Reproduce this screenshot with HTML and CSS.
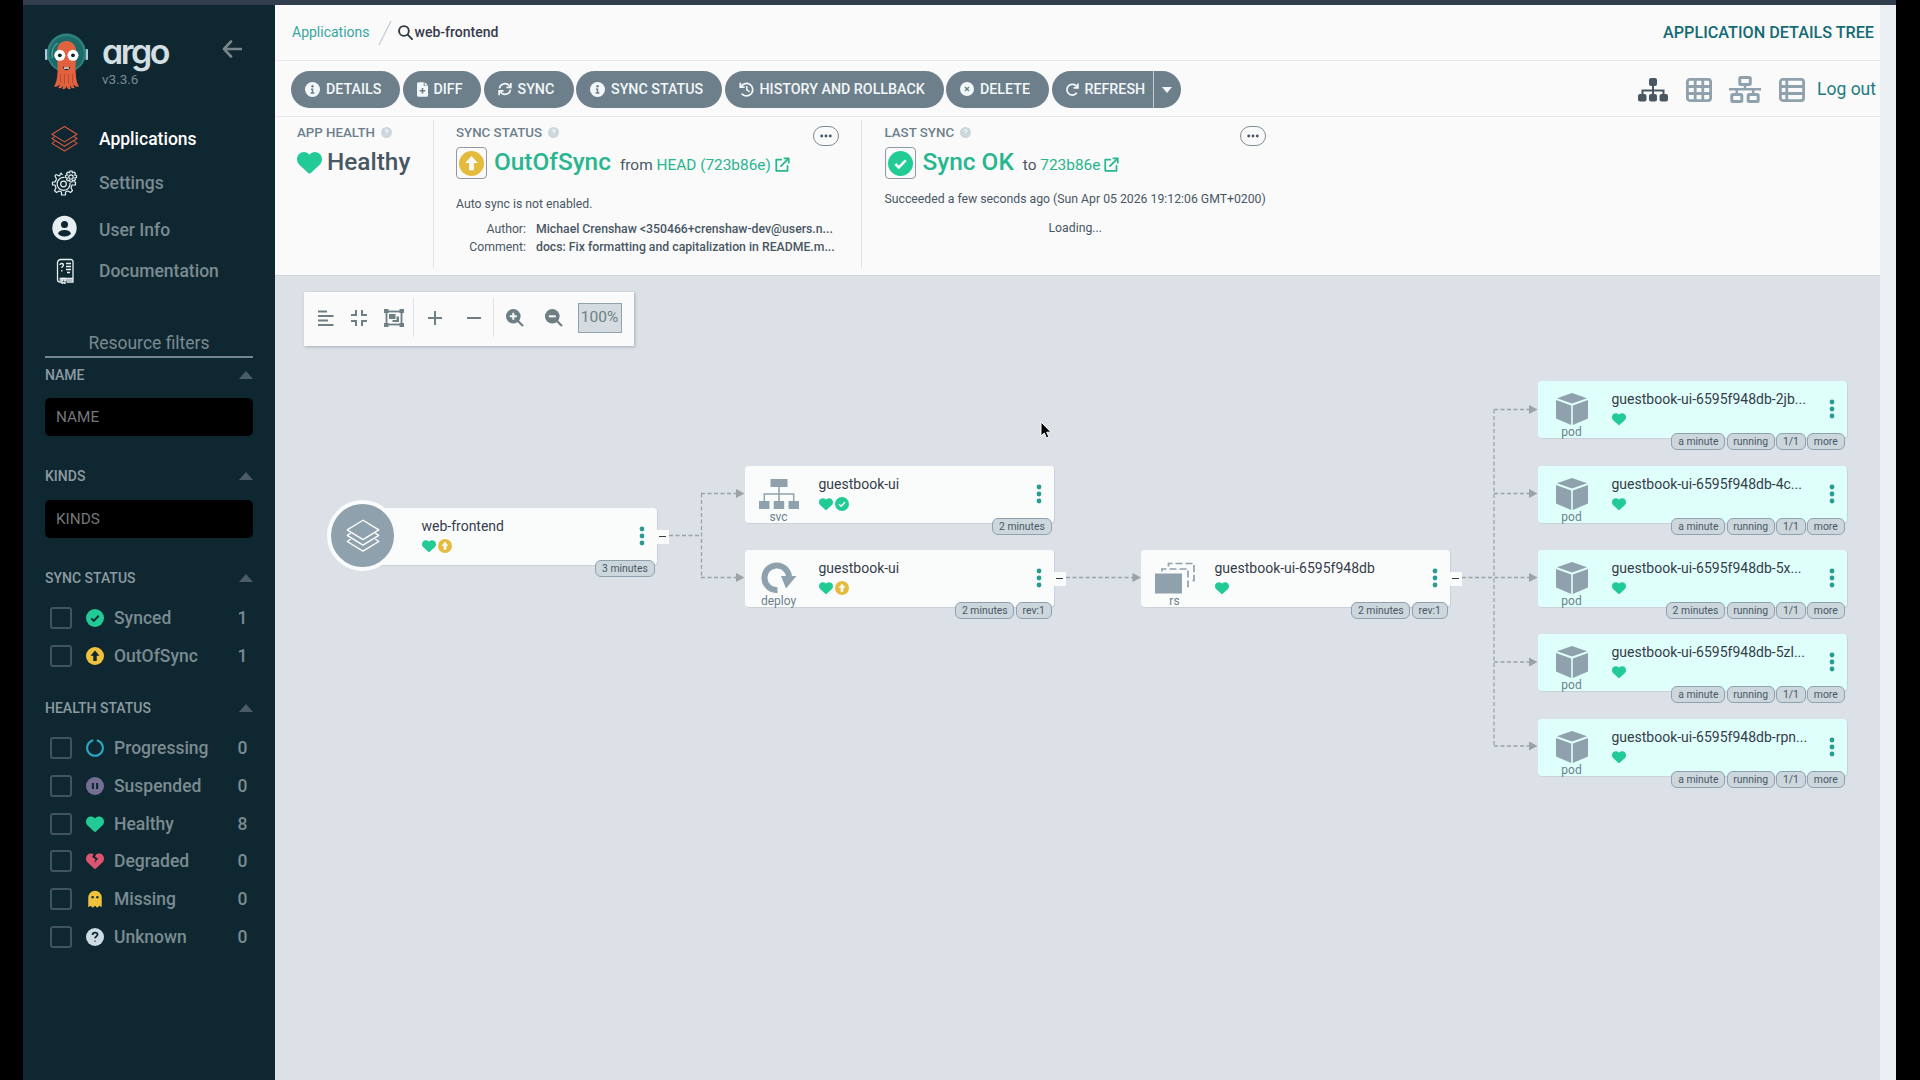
FILE: index.html
```html
<!DOCTYPE html>
<html lang="en">
<head>
    <meta charset="UTF-8">
    <meta name="viewport" content="width=device-width, initial-scale=1.0">
    <title>web-frontend - Application Details Tree - Argo CD</title>
    <link rel="stylesheet" href="styles.css">
</head>
<body>

<svg class="defs" width="0" height="0">
    <symbol id="i-heart" viewBox="0 0 512 512"><path fill="currentColor" d="M47.6 300.4L228.3 469.1c7.5 7 17.4 10.9 27.7 10.9s20.2-3.9 27.7-10.9L464.4 300.4c30.4-28.3 47.6-68 47.6-109.5v-5.8c0-69.9-50.5-129.5-119.4-141C347 36.5 300.6 51.4 268 84L256 96 244 84c-32.6-32.6-79-47.5-124.6-39.9C50.5 55.6 0 115.2 0 185.1v5.8c0 41.5 17.2 81.2 47.6 109.5z"/></symbol>
    <symbol id="i-broken" viewBox="0 0 512 512"><path fill="currentColor" d="M47.6 300.4L228.3 469.1c7.5 7 17.4 10.9 27.7 10.9s20.2-3.9 27.7-10.9L464.4 300.4c30.4-28.3 47.6-68 47.6-109.5v-5.8c0-69.9-50.5-129.5-119.4-141C347 36.5 320 45 300 60L256 130l84 62-100 124 30-112-94-62 40-82c-30-18-62-24-96.600-16.900C50.500 55.600 0 115.200 0 185.100v5.800c0 41.500 17.200 81.200 47.600 109.500z"/></symbol>
    <symbol id="i-check" viewBox="0 0 24 24"><circle cx="12" cy="12" r="12" fill="currentColor"/><path class="cut" d="M7 12.500l3.400 3.300L17 9" stroke-width="2.600"/></symbol>
    <symbol id="i-up" viewBox="0 0 24 24"><circle cx="12" cy="12" r="12" fill="currentColor"/><path class="cut-fill" d="M12 4.800l6 6.700h-3.700V18.500H9.700V11.500H6z"/></symbol>
    <symbol id="i-pause" viewBox="0 0 24 24"><circle cx="12" cy="12" r="12" fill="currentColor"/><path class="cut" d="M9.200 8v8M14.800 8v8" stroke-width="2.800"/></symbol>
    <symbol id="i-notch" viewBox="0 0 24 24"><path fill="none" stroke="currentColor" stroke-width="2.800" stroke-linecap="round" d="M8.500 2A10.500 10.500 0 1 0 15.500 2"/></symbol>
    <symbol id="i-ghost" viewBox="0 0 24 24"><path fill="currentColor" d="M3 10a9 9 0 0 1 18 0v13l-3-2-3 2.500-3-2.500-3 2.500-3-2.500-3 2z"/><circle class="cut-fill" cx="8.800" cy="9.500" r="1.600"/><circle class="cut-fill" cx="15.200" cy="9.500" r="1.600"/></symbol>
    <symbol id="i-question" viewBox="0 0 24 24"><circle cx="12" cy="12" r="12" fill="currentColor"/><path class="cut" d="M8.800 9.200c0-4.300 6.600-4 6.600-.400 0 2.500-3.400 2.300-3.400 4.900M12 17v1" stroke-width="2.400"/></symbol>
    <symbol id="i-info" viewBox="0 0 24 24"><circle cx="12" cy="12" r="12" fill="currentColor"/><circle class="cut-fill" cx="12" cy="6.700" r="1.900"/><path class="cut" d="M9.500 11.500H12V17M9 17.500h6" stroke-width="2.400"/></symbol>
    <symbol id="i-times" viewBox="0 0 24 24"><circle cx="12" cy="12" r="12" fill="currentColor"/><path class="cut" d="M8.500 8.500l7 7M15.500 8.500l-7 7" stroke-width="2.400"/></symbol>
    <symbol id="i-file" viewBox="0 0 18 24"><path fill="currentColor" d="M2.500 0H11v6h7v15.500a2.500 2.500 0 0 1-2.500 2.500h-13A2.500 2.500 0 0 1 0 21.500v-19A2.500 2.500 0 0 1 2.500 0zM12.500 0L18 5h-5.500z"/><path class="cut" d="M9 9.500v9M4.500 14h9" stroke-width="2.600"/></symbol>
    <symbol id="i-sync" viewBox="0 0 24 24"><g fill="none" stroke="currentColor" stroke-width="3"><path d="M2.500 11A9.500 9.500 0 0 1 20 7.500M21.500 13A9.500 9.500 0 0 1 4 16.500"/><path d="M22 1.500v7.500h-7.500M2 22.500V15h7.500"/></g></symbol>
    <symbol id="i-history" viewBox="0 0 24 24"><g fill="none" stroke="currentColor" stroke-width="2.800" stroke-linecap="round"><path d="M3.500 7A10 10 0 1 1 5 19.500M2 2v6h6"/><path d="M12.500 7v5.500l3.500 2.500" stroke-width="2.400"/></g></symbol>
    <symbol id="i-redo" viewBox="0 0 24 24"><g fill="none" stroke="currentColor" stroke-width="3.200"><path d="M20.500 7.500A10 10 0 1 0 20 18"/><path d="M22 1v8h-8"/></g></symbol>
    <symbol id="i-search" viewBox="0 0 24 24"><g fill="none" stroke="currentColor" stroke-width="3" stroke-linecap="round"><circle cx="9.500" cy="9.500" r="7.800"/><path d="M15.500 15.500l7 7"/></g></symbol>
    <symbol id="i-ext" viewBox="0 0 24 24"><g fill="none" stroke="currentColor" stroke-width="2.800" stroke-linecap="round" stroke-linejoin="round"><path d="M10 4H2v18h18v-8M9.500 14.500L21 3"/><path d="M15 2h7v7"/></g></symbol>
    <symbol id="i-stack" viewBox="0 0 28 28"><g fill="none" stroke="currentColor" stroke-width="1.100" stroke-linejoin="round"><path d="M14 1l13 8-13 8L1 9z"/><path d="M4 11.500L1 13.500l13 8 13-8-3-2"/><path d="M4 16.500L1 18.500l13 8 13-8-3-2"/></g></symbol>
    <symbol id="i-pod" viewBox="0 0 32 32"><path fill="currentColor" d="M16 0l15 5.200L16 10.600 1 5.200zM0 7l15.200 5.600V32L0 25.600zM32 7l-15.200 5.600V32L32 25.600z"/></symbol>
    <symbol id="i-svc" viewBox="0 0 40 30"><path fill="currentColor" d="M11.500 0h17v8h-17zM0 22h10.500v8H0zM14.700 22h10.500v8H14.700zM29.500 22H40v8H29.500z"/><path fill="none" stroke="currentColor" stroke-width="1.500" d="M20 8v14M5.300 22v-7h29.400v7"/></symbol>
    <symbol id="i-deploy" viewBox="0 0 36 32"><path fill="none" stroke="currentColor" stroke-width="6" d="M16.500 28A12.300 12.300 0 1 1 28 15"/><path fill="currentColor" d="M20 14h15.500L25 26.500z"/></symbol>
    <symbol id="i-rs" viewBox="0 0 40 31"><path fill="currentColor" d="M0 11h27v20H0z"/><g fill="none" stroke="currentColor" stroke-width="1.700" stroke-dasharray="7 3"><path d="M7 9V6.500h26V24h-4"/><path d="M13.500 4V1H39v17h-4"/></g></symbol>
    <symbol id="i-zoomin" viewBox="0 0 18 18"><circle cx="7.300" cy="7.300" r="7.300" fill="currentColor"/><path d="M11 11l6 6" stroke="currentColor" stroke-width="2.200"/><path class="cut" d="M7.300 3.800v7M3.800 7.300h7" stroke-width="2"/></symbol>
    <symbol id="i-zoomout" viewBox="0 0 18 18"><circle cx="7.300" cy="7.300" r="7.300" fill="currentColor"/><path d="M11 11l6 6" stroke="currentColor" stroke-width="2.200"/><path class="cut" d="M3.800 7.300h7" stroke-width="2"/></symbol>
    <symbol id="i-dots" viewBox="0 0 6 20"><g fill="currentColor"><circle cx="3" cy="3" r="2.400"/><circle cx="3" cy="10" r="2.400"/><circle cx="3" cy="17" r="2.400"/></g></symbol>
    <symbol id="i-ellipsis" viewBox="0 0 14 4"><g fill="currentColor"><circle cx="2" cy="2" r="1.700"/><circle cx="7" cy="2" r="1.700"/><circle cx="12" cy="2" r="1.700"/></g></symbol>
</svg>

<div class="window">
    <nav class="sidebar">
        <div class="brand">
            <svg class="mascot" width="44" height="58" viewBox="0 0 44 58">
                <rect x="0" y="17" width="2.500" height="11" rx="1" fill="#a9cbe2"/>
                <rect x="40.500" y="17" width="2.500" height="11" rx="1" fill="#a9cbe2"/>
                <circle cx="21.500" cy="21" r="19.500" fill="#2f7f7c"/>
                <circle cx="21.500" cy="21.500" r="17.300" fill="#1c6a69"/>
                <path d="M7.500 26a15 15 0 0 1 5-15" fill="none" stroke="#4c9a96" stroke-width="1.500"/>
                <path fill="#e2623f" d="M21.500 9c-6.500 0-9.500 5-9.500 11 0 8 1 12 .5 20-.3 6-1 11-3.500 14.500 3 .8 4.500-.5 5.500-2.500 0 2-.3 3-1.500 4 3 1 4.500-.5 5-3 0 2 0 3-1 4 3 .5 4-.5 4.500-3 .5 2.500 1.500 3.500 4.500 3-1-1-1-2-1-4 .5 2.500 2 4 5 3-1.200-1-1.500-2-1.500-4 1 2 2.500 3.300 5.500 2.500C31.500 51 31 46 30.700 40c-.5-8 .5-12 .5-20 0-6-3.200-11-9.700-11z"/>
                <path d="M15.500 42v9M19.500 42v10M23.500 42v10M27.500 42v9" stroke="#bb4a31" stroke-width="1"/>
                <circle cx="14.800" cy="23.300" r="5.500" fill="#fff"/>
                <circle cx="28" cy="23.300" r="5.500" fill="#fff"/>
                <circle cx="14.800" cy="23.300" r="1.900" fill="#0f2733"/>
                <circle cx="28" cy="23.300" r="1.900" fill="#0f2733"/>
                <path d="M17.800 34.500c2.500 1.500 5 1.500 7.500 0-1 5-6.500 5-7.500 0z" fill="#0f2733"/>
                <path d="M19 35.400h5v1.300h-5z" fill="#fff"/>
            </svg>
            <div class="brand-text">
                <div class="brand-name">argo</div>
                <div class="brand-version">v3.3.6</div>
            </div>
            <svg class="collapse" width="20" height="18" viewBox="0 0 20 18"><path d="M9 1.500L2 9l7 7.500M2 9h17" fill="none" stroke="currentColor" stroke-width="2.600" stroke-linecap="round" stroke-linejoin="round"/></svg>
        </div>

        <ul class="menu">
            <li class="menu-item active">
                <svg class="menu-apps" width="28" height="28"><use href="#i-stack"/></svg>
                Applications
            </li>
            <li class="menu-item">
                <svg width="26" height="26" viewBox="0 0 26 26" fill="none" stroke="currentColor" stroke-width="1.200" stroke-linejoin="round">
                    <circle cx="12" cy="14" r="2.800"/>
                    <path d="M13 7.500A6.500 6.500 0 1 0 18.500 13" />
                    <path d="M11 5l-1.500-2L8 6 4.500 4.500 3.500 6l1.500 3-1.500 3H1v3h2.500l1 3L3 20.500 5 22.500l2.500-1.500 2.500 1V25h4v-3l2.500-1 2.500 1.500 2-2-1.500-2.500 1-3H24v-3h-2"/>
                    <circle cx="19.500" cy="7" r="2.200"/>
                    <path d="M18.500 1h2l.4 1.800 1.600-.8 1.500 1.400-.9 1.600 1.900.5v2l-1.900.5.900 1.600-1.500 1.400-1.600-.9-.4 1.900h-2l-.4-1.900-1.600.9L15 9.600l.9-1.600-1.900-.5v-2l1.900-.5-.9-1.600L16.500 2l1.600.8z"/>
                </svg>
                Settings
            </li>
            <li class="menu-item menu-user">
                <svg width="26" height="26" viewBox="0 0 26 26"><circle cx="13" cy="13" r="12.200" fill="currentColor"/><circle cx="13" cy="9.500" r="3.500" fill="#0f2733"/><ellipse cx="13" cy="18.200" rx="6.200" ry="3.200" fill="#0f2733"/></svg>
                User Info
            </li>
            <li class="menu-item menu-docs">
                <svg width="26" height="26" viewBox="0 0 26 26" fill="none" stroke="currentColor" stroke-width="1.300">
                    <path d="M8 20.500h13.500V3.500a2 2 0 0 0-2-2h-10a3.500 3.500 0 0 0-3.500 3v17a2.500 2.500 0 0 0 2.500 2.500h2M21.500 20.500v3.500H15M8 22.200h13"/>
                    <path d="M10.500 20.500h3v5l-1.500-1-1.500 1z"/>
                    <path d="M14.500 5.500h5M14.500 8.500h5M14.500 11.500h5M15.500 14.500h3"/>
                    <path d="M8.500 7c0-2 3.500-2 3.500 0 0 1.300-1.700 1.300-1.700 3M10.300 12v1.500"/>
                </svg>
                Documentation
            </li>
        </ul>

        <div class="filters">
            <div class="filters-title">Resource filters</div>

            <div class="filter-head">NAME<span class="caret"></span></div>
            <input class="filter-input" type="text" placeholder="NAME">

            <div class="filter-head">KINDS<span class="caret"></span></div>
            <input class="filter-input" type="text" placeholder="KINDS">

            <div class="filter-head">SYNC STATUS<span class="caret"></span></div>
            <ul class="checks">
                <li><span class="box"></span><svg class="green"><use href="#i-check"/></svg>Synced<b>1</b></li>
                <li><span class="box"></span><svg class="yellow"><use href="#i-up"/></svg>OutOfSync<b>1</b></li>
            </ul>

            <div class="filter-head">HEALTH STATUS<span class="caret"></span></div>
            <ul class="checks">
                <li><span class="box"></span><svg class="blue"><use href="#i-notch"/></svg>Progressing<b>0</b></li>
                <li><span class="box"></span><svg class="purple"><use href="#i-pause"/></svg>Suspended<b>0</b></li>
                <li><span class="box"></span><svg class="green"><use href="#i-heart"/></svg>Healthy<b>8</b></li>
                <li><span class="box"></span><svg class="red"><use href="#i-broken"/></svg>Degraded<b>0</b></li>
                <li><span class="box"></span><svg class="yellow"><use href="#i-ghost"/></svg>Missing<b>0</b></li>
                <li><span class="box"></span><svg class="pale"><use href="#i-question"/></svg>Unknown<b>0</b></li>
            </ul>
        </div>
    </nav>

    <main class="main">
        <header class="topbar">
            <a class="crumb">Applications</a>
            <svg class="slash" width="14" height="26" viewBox="0 0 14 26"><path d="M13 1L1 25" stroke="#c5ccd3" stroke-width="1.300"/></svg>
            <svg class="crumb-search" width="15" height="15"><use href="#i-search"/></svg>
            <span class="crumb-current">web-frontend</span>
            <span class="page-title">APPLICATION DETAILS TREE</span>
        </header>

        <div class="toolbar">
            <button class="btn btn-details"><svg width="15" height="15"><use href="#i-info"/></svg>DETAILS</button>
            <button class="btn btn-diff"><svg width="11" height="15"><use href="#i-file"/></svg>DIFF</button>
            <button class="btn btn-sync"><svg width="14" height="14"><use href="#i-sync"/></svg>SYNC</button>
            <button class="btn btn-status"><svg width="15" height="15"><use href="#i-info"/></svg>SYNC STATUS</button>
            <button class="btn btn-history"><svg width="15" height="15"><use href="#i-history"/></svg>HISTORY AND ROLLBACK</button>
            <button class="btn btn-delete"><svg width="14" height="14"><use href="#i-times"/></svg>DELETE</button>
            <button class="btn btn-refresh"><svg width="13" height="13"><use href="#i-redo"/></svg>REFRESH<span class="drop"><i></i></span></button>

            <div class="views">
                <svg class="view-active" width="30" height="24" viewBox="0 0 30 24"><path fill="none" stroke="currentColor" stroke-width="2" d="M15 6v12M4.500 18v-5.500h21V18"/><g fill="currentColor"><rect x="11" y="0" width="8" height="8" rx="2"/><rect x="0" y="16" width="8.500" height="7.500" rx="2"/><rect x="11" y="16" width="8" height="7.500" rx="2"/><rect x="21.500" y="16" width="8.500" height="7.500" rx="2"/></g></svg>
                <svg width="26" height="24" viewBox="0 0 26 24" fill="none" stroke="currentColor" stroke-width="2.800"><rect x="1.400" y="1.400" width="23.200" height="21.200" rx="2.500"/><path d="M9.200 1v22M16.800 1v22M1 8.500h24M1 15.500h24"/></svg>
                <svg width="32" height="27" viewBox="0 0 32 27" fill="none" stroke="currentColor" stroke-width="3"><rect x="10.800" y="1.500" width="10.500" height="7" rx="1"/><rect x="2.800" y="18.500" width="10" height="7" rx="1"/><rect x="19.200" y="18.500" width="10" height="7" rx="1"/><path stroke-width="2.500" d="M0 13.200h32M16 9v4M7.800 13v5M24.200 13v5"/></svg>
                <svg width="26" height="24" viewBox="0 0 26 24" fill="none" stroke="currentColor" stroke-width="2.800"><rect x="1.400" y="1.400" width="23.200" height="21.200" rx="2.500"/><path d="M7.800 1v22M1 8.500h24M1 15.500h24"/></svg>
                <a class="logout">Log out</a>
            </div>
        </div>

        <section class="status">
            <div class="status-col col-health">
                <div class="label">APP HEALTH<svg><use href="#i-question"/></svg></div>
                <div class="value"><svg class="green" width="25" height="25"><use href="#i-heart"/></svg><span class="big">Healthy</span></div>
            </div>
            <div class="status-col col-sync">
                <div class="label">SYNC STATUS<svg><use href="#i-question"/></svg><button class="more"><svg><use href="#i-ellipsis"/></svg></button></div>
                <div class="value">
                    <span class="iconbox"><svg class="amber" width="25" height="25"><use href="#i-up"/></svg></span>
                    <a class="big link">OutOfSync</a>
                    <span class="rev">from <a>HEAD (723b86e)</a></span>
                    <svg class="ext"><use href="#i-ext"/></svg>
                </div>
                <p class="auto">Auto sync is not enabled.</p>
                <dl class="commit">
                    <dt>Author:</dt><dd>Michael Crenshaw &lt;350466+crenshaw-dev@users.n...</dd>
                    <dt>Comment:</dt><dd>docs: Fix formatting and capitalization in README.m...</dd>
                </dl>
            </div>
            <div class="status-col col-last">
                <div class="label">LAST SYNC<svg><use href="#i-question"/></svg><button class="more"><svg><use href="#i-ellipsis"/></svg></button></div>
                <div class="value">
                    <span class="iconbox"><svg class="green" width="25" height="25"><use href="#i-check"/></svg></span>
                    <a class="big link">Sync OK</a>
                    <span class="rev">to <a>723b86e</a></span>
                    <svg class="ext"><use href="#i-ext"/></svg>
                </div>
                <p class="succeeded">Succeeded a few seconds ago (Sun Apr 05 2026 19:12:06 GMT+0200)</p>
                <p class="loading">Loading...</p>
            </div>
        </section>

        <section class="canvas">
            <div class="tools">
                <div class="tool-group group-layout">
                    <svg width="16" height="16" viewBox="0 0 16 16"><path d="M0 1.500h9M0 6h15.500M0 10.500h10M0 15h15.500" stroke="currentColor" stroke-width="1.900"/></svg>
                    <svg width="16" height="16" viewBox="0 0 16 16"><path d="M5 0v5H0M11 0v5h5M5 16v-5H0M11 16v-5h5" fill="none" stroke="currentColor" stroke-width="2"/></svg>
                    <svg width="20" height="18" viewBox="0 0 20 18"><rect x="2.500" y="2.500" width="15" height="13" fill="none" stroke="currentColor" stroke-width="1.800"/><path fill="currentColor" d="M0 0h4.500v4H0zM15.500 0H20v4h-4.500zM0 14h4.500v4H0zM15.500 14H20v4h-4.500zM5 5h6.500v5H5zM12.500 7.500H15V13H8.500v-2h4z"/></svg>
                </div>
                <div class="tool-group group-fold">
                    <svg width="14" height="14" viewBox="0 0 14 14"><path d="M7 0v14M0 7h14" stroke="currentColor" stroke-width="2"/></svg>
                    <svg width="14" height="14" viewBox="0 0 14 14"><path d="M0 7h14" stroke="currentColor" stroke-width="2"/></svg>
                </div>
                <div class="tool-group group-zoom">
                    <svg width="18" height="18"><use href="#i-zoomin"/></svg>
                    <svg width="18" height="18"><use href="#i-zoomout"/></svg>
                    <span class="zoom">100%</span>
                </div>
            </div>

            <svg class="edges" width="1605" height="805" viewBox="275 275 1605 805">
                <g fill="none" stroke="#9aa3a8" stroke-width="1.300" stroke-dasharray="4 2.500">
                    <path d="M669 535.500H701M701.500 493.500V577.500M701 493.500H740M701 577.500H740"/>
                    <path d="M1066 577.500H1136"/>
                    <path d="M1462 577.500H1534M1494 409.500V746M1494 409.500H1534M1494 493.500H1534M1494 662H1534M1494 746H1534"/>
                </g>
                <path fill="#9aa3a8" d="M736 489l8.500 4.500-8.500 4.500zM736 573l8.500 4.500-8.500 4.500zM1132.500 573l8.500 4.500-8.500 4.500zM1529 405l8.500 4.500-8.500 4.500zM1529 489l8.500 4.500-8.500 4.500zM1529 573l8.500 4.500-8.500 4.500zM1529 657.500l8.500 4.500-8.500 4.500zM1529 741.500l8.500 4.500-8.500 4.500z"/>
            </svg>

            <div class="node node-app">
                <div class="app-circle"><svg width="34" height="34"><use href="#i-stack"/></svg></div>
                <div class="kind"></div>
                <div class="info"><div class="name">web-frontend</div><div class="state"><svg class="green"><use href="#i-heart"/></svg><svg class="amber"><use href="#i-up"/></svg></div></div>
                <svg class="dots"><use href="#i-dots"/></svg>
                <div class="pills"><span>3 minutes</span></div>
                <div class="fold"></div>
            </div>

            <div class="node node-svc">
                <div class="kind"><svg width="40" height="30"><use href="#i-svc"/></svg>svc</div>
                <div class="info"><div class="name">guestbook-ui</div><div class="state"><svg class="green"><use href="#i-heart"/></svg><svg class="green"><use href="#i-check"/></svg></div></div>
                <svg class="dots"><use href="#i-dots"/></svg>
                <div class="pills"><span>2 minutes</span></div>
            </div>

            <div class="node node-deploy">
                <div class="kind"><svg width="36" height="32"><use href="#i-deploy"/></svg>deploy</div>
                <div class="info"><div class="name">guestbook-ui</div><div class="state"><svg class="green"><use href="#i-heart"/></svg><svg class="amber"><use href="#i-up"/></svg></div></div>
                <svg class="dots"><use href="#i-dots"/></svg>
                <div class="pills"><span>2 minutes</span><span>rev:1</span></div>
                <div class="fold"></div>
            </div>

            <div class="node node-rs">
                <div class="kind"><svg width="40" height="31"><use href="#i-rs"/></svg>rs</div>
                <div class="info"><div class="name">guestbook-ui-6595f948db</div><div class="state"><svg class="green"><use href="#i-heart"/></svg></div></div>
                <svg class="dots"><use href="#i-dots"/></svg>
                <div class="pills"><span>2 minutes</span><span>rev:1</span></div>
                <div class="fold"></div>
            </div>

            <div class="node pod pod-1">
                <div class="kind"><svg width="32" height="32"><use href="#i-pod"/></svg>pod</div>
                <div class="info"><div class="name">guestbook-ui-6595f948db-2jb...</div><div class="state"><svg class="green"><use href="#i-heart"/></svg></div></div>
                <svg class="dots"><use href="#i-dots"/></svg>
                <div class="pills"><span>a minute</span><span>running</span><span>1/1</span><span>more</span></div>
            </div>
            <div class="node pod pod-2">
                <div class="kind"><svg width="32" height="32"><use href="#i-pod"/></svg>pod</div>
                <div class="info"><div class="name">guestbook-ui-6595f948db-4c...</div><div class="state"><svg class="green"><use href="#i-heart"/></svg></div></div>
                <svg class="dots"><use href="#i-dots"/></svg>
                <div class="pills"><span>a minute</span><span>running</span><span>1/1</span><span>more</span></div>
            </div>
            <div class="node pod pod-3">
                <div class="kind"><svg width="32" height="32"><use href="#i-pod"/></svg>pod</div>
                <div class="info"><div class="name">guestbook-ui-6595f948db-5x...</div><div class="state"><svg class="green"><use href="#i-heart"/></svg></div></div>
                <svg class="dots"><use href="#i-dots"/></svg>
                <div class="pills"><span>2 minutes</span><span>running</span><span>1/1</span><span>more</span></div>
            </div>
            <div class="node pod pod-4">
                <div class="kind"><svg width="32" height="32"><use href="#i-pod"/></svg>pod</div>
                <div class="info"><div class="name">guestbook-ui-6595f948db-5zl...</div><div class="state"><svg class="green"><use href="#i-heart"/></svg></div></div>
                <svg class="dots"><use href="#i-dots"/></svg>
                <div class="pills"><span>a minute</span><span>running</span><span>1/1</span><span>more</span></div>
            </div>
            <div class="node pod pod-5">
                <div class="kind"><svg width="32" height="32"><use href="#i-pod"/></svg>pod</div>
                <div class="info"><div class="name">guestbook-ui-6595f948db-rpn...</div><div class="state"><svg class="green"><use href="#i-heart"/></svg></div></div>
                <svg class="dots"><use href="#i-dots"/></svg>
                <div class="pills"><span>a minute</span><span>running</span><span>1/1</span><span>more</span></div>
            </div>

            <svg class="pointer" width="13" height="18" viewBox="0 0 13 18"><path d="M1 1v14l3.300-3 2.200 5 2.400-1-2.200-4.800H11z" fill="#000" stroke="#fff" stroke-width="1"/></svg>
        </section>
    </main>
</div>

</body>
</html>
```
FILE: styles.css
```css
* {
    box-sizing: border-box;
}
body {
    margin: 0;
    height: 1080px;
    overflow: hidden;
    background: #000;
    font-family: Roboto, "Liberation Sans", sans-serif;
    color: #495763;
}
ul, dl, dd, p {
    margin: 0;
    padding: 0;
    list-style: none;
}
svg {
    display: block;
    flex: none;
}
button {
    font-family: inherit;
    border: none;
}
.defs {
    position: absolute;
}
.cut {
    fill: none;
    stroke: var(--cut);
}
.cut-fill {
    fill: var(--cut);
}
.green { color: #22cb96; }
.yellow { color: #efc13c; }
.amber { color: #e5bb3e; }
.blue { color: #2ca7c4; }
.purple { color: #766f94; }
.red { color: #dc5570; }
.pale { color: #ccdbe4; }

.window {
    display: flex;
    width: 1873px;
    height: 1080px;
    margin-left: 23px;
    border-top: 5px solid #323e4d;
    background: #ecf0f4;
}

/* sidebar */
.sidebar {
    --cut: #0f2730;
    width: 252px;
    padding: 27px 22px 0;
    background: #0f2730;
    color: #7b8b92;
}
.brand {
    display: flex;
    height: 85px;
}
.brand-text {
    flex: 1;
    padding: 1px 0 0 13px;
}
.brand-name {
    font: 600 34px/38px Inter, sans-serif;
    font-feature-settings: "cv11";
    letter-spacing: -2.500px;
    color: #d3dfe2;
}
.brand-version {
    font-size: 13.500px;
    line-height: 16px;
}
.collapse {
    margin: 8px 11px 0 0;
    color: #78868c;
}
.menu-item {
    display: flex;
    align-items: center;
    gap: 21px;
    height: 44px;
    padding-left: 6px;
    font-size: 17.500px;
    font-weight: 500;
}
.menu-item svg {
    width: 27px;
    color: #e6eef1;
}
.menu-item.active {
    color: #fff;
}
.menu-item .menu-apps {
    color: #d9583f;
}
.menu-user {
    height: 50px;
}
.menu-user svg {
    margin-bottom: 4px;
}
.menu-docs {
    height: 32px;
}
.filters {
    margin-top: 42px;
}
.filters-title {
    height: 29px;
    border-bottom: 2px solid #75868d;
    font-size: 17.500px;
    line-height: 28px;
    text-align: center;
}
.filter-head {
    display: flex;
    align-items: center;
    justify-content: space-between;
    height: 35px;
    font-size: 14px;
    font-weight: 500;
    color: #8c9ba2;
}
.filters-title + .filter-head {
    margin-top: -1px;
}
.caret {
    border: 7px solid transparent;
    border-top: none;
    border-bottom: 8px solid #4c5c66;
}
.filter-input {
    display: block;
    width: 208px;
    height: 38px;
    margin: 6px 0 22.500px;
    padding: 0 11px;
    border: none;
    border-radius: 5px;
    background: #000;
    font: 15.300px Roboto, sans-serif;
}
.filter-input::placeholder {
    color: #75777a;
}
.checks {
    margin: 4px 0 16px;
}
.checks li {
    display: flex;
    align-items: center;
    height: 37.700px;
    padding: 0 5px;
    font-size: 17.500px;
    font-weight: 500;
}
.checks .box {
    width: 22px;
    height: 22px;
    border: 2px solid #42545d;
    border-radius: 3px;
}
.checks svg {
    width: 18px;
    height: 18px;
    margin: 0 10px 0 14px;
}
.checks b {
    width: 11px;
    margin-left: auto;
    text-align: center;
    font-weight: 500;
}

/* header */
.main {
    --cut: #fafafb;
    display: flex;
    flex-direction: column;
    width: 1605px;
    background: #fafafb;
}
.topbar {
    display: flex;
    align-items: center;
    height: 56px;
    padding: 0 6px 1px 17px;
    border-bottom: 1px solid #e6eaed;
    font-size: 14px;
}
.crumb {
    color: #37a69b;
}
.slash {
    margin: 2px 6px 0 8px;
}
.crumb-search {
    margin-right: 2px;
    color: #30393f;
}
.crumb-current {
    color: #363c4a;
    font-weight: 500;
}
.page-title {
    margin-left: auto;
    color: #146b73;
    font-size: 16.200px;
    font-weight: 500;
}
.toolbar {
    --cut: #6d7f8b;
    display: flex;
    align-items: center;
    gap: 2.500px;
    height: 56px;
    padding: 2px 4px 0 16px;
    border-bottom: 1px solid #e6eaed;
}
.btn {
    display: flex;
    align-items: center;
    gap: 6px;
    height: 37px;
    padding: 0 0 1px 14px;
    border-radius: 19px;
    background: #6d7f8b;
    color: #f2f7f9;
    font-size: 14.250px;
    font-weight: 500;
    white-space: nowrap;
}
.btn-details { width: 109px; }
.btn-diff { width: 78.500px; }
.btn-sync { width: 90px; }
.btn-status { width: 146px; }
.btn-history { width: 219px; }
.btn-delete { width: 103px; }
.btn-refresh { width: 129px; }
.drop {
    display: flex;
    align-items: center;
    height: 37px;
    padding-left: 8px;
    margin: 1px 0 0 2px;
    border-left: 1px solid #c4ccd2;
}
.drop i {
    border: 5px solid transparent;
    border-top: 6px solid #f2f7f9;
    border-bottom: none;
}
.views {
    display: flex;
    align-items: center;
    gap: 17.500px;
    margin-left: auto;
    color: #8fa1ac;
}
.view-active {
    color: #495763;
}
.logout {
    margin-left: -5px;
    padding-bottom: 2px;
    color: #1d7b80;
    font-size: 17.500px;
}

/* status panel */
.status {
    display: flex;
    height: 158px;
    padding: 3px 0 7px 22px;
}
.status-col {
    font-size: 12.250px;
}
.col-health {
    width: 137px;
    border-right: 1px solid #dee4e8;
}
.col-sync {
    width: 428px;
    padding: 0 22px;
    border-right: 1px solid #dee4e8;
}
.col-last {
    width: 404px;
    padding-left: 22.500px;
}
.label {
    display: flex;
    align-items: center;
    height: 25px;
    color: #6d7f8b;
    font-size: 13.300px;
    font-weight: 500;
}
.label > svg {
    width: 11px;
    height: 11px;
    margin-left: 6px;
    color: #ccd6dd;
}
.more {
    display: flex;
    align-items: center;
    justify-content: center;
    width: 26px;
    height: 20px;
    margin: 7px 0 0 auto;
    border: 1px solid #7f8b93;
    border-radius: 10px;
    background: none;
    color: #495763;
}
.more svg {
    width: 12px;
    height: 4px;
}
.value {
    display: flex;
    align-items: center;
    height: 36px;
}
.big {
    margin-left: 7px;
    font-size: 24.400px;
    font-weight: 500;
    line-height: 32px;
    padding-bottom: 2px;
}
.col-health .value > svg {
    margin-bottom: 1px;
}
.col-health .big {
    margin-left: 5px;
}
.link, .rev a {
    color: #27b68e;
}
.iconbox {
    display: flex;
    align-items: center;
    justify-content: center;
    width: 31px;
    height: 32px;
    border: 1px solid #8e99a3;
    border-radius: 4px;
}
.rev {
    margin-left: 9px;
    padding-top: 3px;
    font-size: 15.400px;
    white-space: pre;
}
.ext {
    width: 15px;
    height: 15px;
    margin: 3px 0 0 4px;
    color: #27b68e;
}
.auto {
    margin-top: 14px;
    line-height: 19px;
}
.commit {
    display: grid;
    grid-template-columns: 70px 1fr;
    column-gap: 10px;
    margin-top: 6px;
    line-height: 18px;
    white-space: nowrap;
}
.commit dt {
    text-align: right;
}
.commit dd {
    font-weight: 500;
}
.succeeded {
    margin-top: 9px;
    line-height: 19px;
    white-space: nowrap;
}
.loading {
    margin-top: 10px;
    line-height: 19px;
    text-align: center;
}

/* resource tree */
.canvas {
    position: relative;
    flex: 1;
    background: #dce1e7;
    box-shadow: inset 0 1px #ced5d9;
}
.tools {
    position: absolute;
    left: 28.500px;
    top: 17px;
    display: flex;
    width: 330px;
    height: 54px;
    padding-top: 6px;
    background: #fafafb;
    box-shadow: 1px 1px 3px #a3adb4;
    color: #6d7f84;
}
.tool-group {
    display: flex;
    align-items: center;
    height: 39px;
}
.group-layout {
    width: 110px;
    padding-left: 14px;
    gap: 17px;
    border-right: 1px solid #dee4e8;
}
.group-fold {
    width: 80px;
    padding-left: 14px;
    gap: 25px;
    border-right: 1px solid #dee4e8;
}
.group-zoom {
    padding-left: 12px;
    gap: 21.500px;
}
.zoom {
    width: 44px;
    height: 30px;
    margin-left: -7px;
    border: 1px solid #8fa1ac;
    background: #d4dce1;
    font-size: 15.500px;
    line-height: 27px;
    text-align: center;
}
.edges {
    position: absolute;
    left: 0;
    top: 0;
}
.node {
    position: absolute;
    display: flex;
    width: 309px;
    height: 57px;
    border-radius: 4px;
    background: #fafcfc;
    box-shadow: 1px 1px 1px #c9d0d6;
}
.node-app { left: 73px; top: 233px; }
.node-svc { left: 470px; top: 190.500px; }
.node-deploy { left: 470px; top: 275px; }
.node-rs { left: 866px; top: 275px; }
.pod {
    --cut: #dffffb;
    left: 1263px;
    background: #dffffb;
}
.pod-1 { top: 106px; }
.pod-2 { top: 190.500px; }
.pod-3 { top: 275px; }
.pod-4 { top: 359px; }
.pod-5 { top: 443.500px; }
.kind {
    display: flex;
    flex-direction: column;
    align-items: center;
    width: 67px;
    padding-top: 12px;
    font-size: 12px;
    line-height: 14px;
    color: #6d7f8b;
}
.kind svg {
    height: 32px;
    color: #8fa1ac;
}
.info {
    flex: 1;
    padding: 9px 0 0 6.500px;
}
.name {
    color: #363c4a;
    font-size: 14px;
    line-height: 18px;
    white-space: nowrap;
}
.state {
    display: flex;
    gap: 2px;
    margin-top: 4px;
}
.state svg {
    width: 14px;
    height: 14px;
}
.dots {
    width: 6px;
    height: 20px;
    margin: 18px 12px 0 0;
    color: #2a9b92;
}
.pills {
    position: absolute;
    right: 2.500px;
    bottom: -12px;
    display: flex;
    gap: 1.500px;
}
.pills span {
    height: 17px;
    padding: 0 5.700px;
    border: 1px solid #8fa1ac;
    border-radius: 6px;
    background: #ccd6dd;
    color: #495763;
    font-size: 10.400px;
    line-height: 15px;
}
.fold {
    position: absolute;
    right: -12px;
    top: 22px;
    width: 12px;
    height: 14px;
    padding: 6px 3px 0 2px;
    background: #fafcfc;
}
.fold::before {
    content: "";
    display: block;
    height: 1px;
    background: #363c4a;
}
.app-circle {
    position: absolute;
    left: -21px;
    top: -8px;
    display: flex;
    align-items: center;
    justify-content: center;
    width: 71px;
    height: 71px;
    border: 4px solid #fafcfc;
    border-radius: 50%;
    background: #8fa1ac;
    color: #fff;
}
.pointer {
    position: absolute;
    left: 765px;
    top: 146px;
}
```
